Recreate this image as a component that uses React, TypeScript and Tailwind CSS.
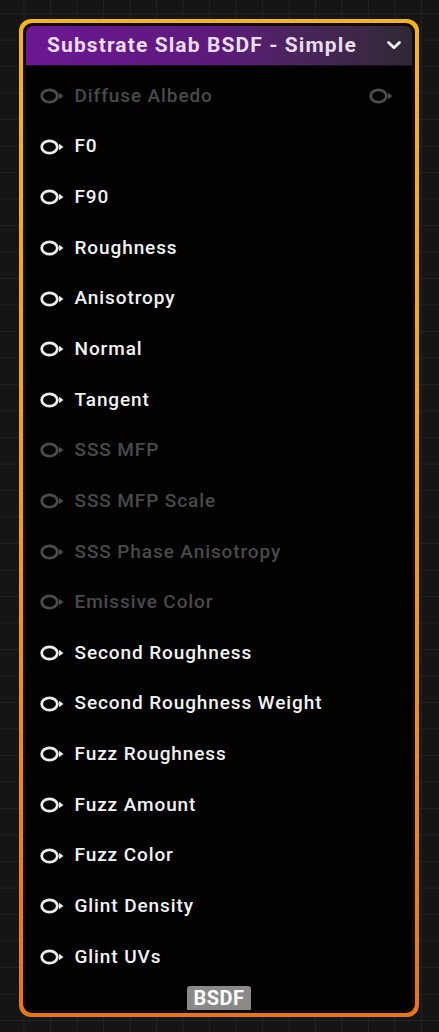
import React from "react";

type Pin = { label: string; enabled: boolean };

const pins: Pin[] = [
  { label: "Diffuse Albedo", enabled: false },
  { label: "F0", enabled: true },
  { label: "F90", enabled: true },
  { label: "Roughness", enabled: true },
  { label: "Anisotropy", enabled: true },
  { label: "Normal", enabled: true },
  { label: "Tangent", enabled: true },
  { label: "SSS MFP", enabled: false },
  { label: "SSS MFP Scale", enabled: false },
  { label: "SSS Phase Anisotropy", enabled: false },
  { label: "Emissive Color", enabled: false },
  { label: "Second Roughness", enabled: true },
  { label: "Second Roughness Weight", enabled: true },
  { label: "Fuzz Roughness", enabled: true },
  { label: "Fuzz Amount", enabled: true },
  { label: "Fuzz Color", enabled: true },
  { label: "Glint Density", enabled: true },
  { label: "Glint UVs", enabled: true },
];

function PinIcon({ color }: { color: string }) {
  return (
    <svg width="25" height="18" viewBox="0 0 25 18" className="shrink-0">
      <ellipse cx="9.5" cy="9" rx="7.8" ry="6.2" fill="none" stroke={color} strokeWidth="2.8" />
      <path d="M19 5.8 L23.5 9 L19 12.2 Z" fill={color} />
    </svg>
  );
}

export default function App() {
  return (
    <div
      className="w-[439px] h-[1032px] bg-[#151515] pt-[19px] pl-[19px]"
      style={{
        backgroundImage:
          "linear-gradient(#222 1px, transparent 1px), linear-gradient(90deg, #222 1px, transparent 1px)",
        backgroundSize: "26.5px 26.5px",
        backgroundPosition: "-3px 13px",
      }}
    >
      <div className="w-[400px] h-[998px] rounded-[12px] p-[4px] bg-gradient-to-b from-[#f4b51c] via-[#efa01a] to-[#e6761a]">
        <div className="h-full rounded-[9px] p-[3px] bg-[#120a04]">
          <div
            className="relative h-full rounded-[7px] bg-[#020202] flex flex-col"
            style={{ fontFamily: "Roboto, 'Liberation Sans', sans-serif" }}
          >
            <div className="h-[40px] rounded-t-[7px] bg-gradient-to-r from-[#6c1794] via-[#5c1a7a] to-[#302834] flex items-center pl-[21px] pr-[10px] border-b border-[#1a1020]">
              <span className="flex-1 text-[21px] font-bold text-[#eadcf2] tracking-[1.1px] leading-none">
                Substrate Slab BSDF - Simple
              </span>
              <svg width="16" height="11" viewBox="0 0 16 11">
                <path d="M2.5 2.5 L8 7.8 L13.5 2.5" fill="none" stroke="#f2f2f2" strokeWidth="2.8" strokeLinecap="round" strokeLinejoin="round" />
              </svg>
            </div>
            <div className="pt-[4.7px] flex flex-col">
              {pins.map((p, i) => (
                <div key={i} className="h-[50.65px] flex items-center pl-[13.5px] pr-[18px]">
                  <PinIcon color={p.enabled ? "#ececec" : "#4c4c4c"} />
                  <span
                    className={
                      "ml-[10px] flex-1 text-[19px] font-medium tracking-[0.9px] " +
                      (p.enabled ? "text-[#f2f2f2]" : "text-[#4a4a4a]")
                    }
                  >
                    {p.label}
                  </span>
                  {i === 0 && <PinIcon color="#4c4c4c" />}
                </div>
              ))}
            </div>
            <div className="flex-1 flex items-end justify-center">
              <div className="px-[6px] h-[24px] leading-[24px] rounded-t-[3px] rounded-b-[1px] bg-[#8a8a8a] text-white text-[20px] font-bold tracking-[0.5px]">
                BSDF
              </div>
            </div>
          </div>
        </div>
      </div>
    </div>
  );
}
